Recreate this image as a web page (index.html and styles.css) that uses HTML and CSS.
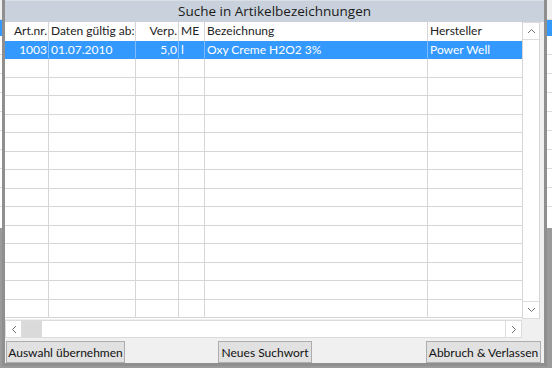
FILE: index.html
```html
<!DOCTYPE html>
<html lang="de">
<head>
  <meta charset="UTF-8" />
  <title>Suche in Artikelbezeichnungen</title>
  <link rel="stylesheet" href="styles.css">
</head>
<body>

<div class="desk">
  <div class="desk-rows">
    <div class="desk-row top"></div>
    <div class="desk-row blue"></div>
    <div class="desk-row"></div>
    <div class="desk-row"></div>
    <div class="desk-row"></div>
    <div class="desk-row"></div>
    <div class="desk-row"></div>
    <div class="desk-row"></div>
    <div class="desk-row"></div>
    <div class="desk-row"></div>
    <div class="desk-row"></div>
  </div>
  <div class="desk-bottom"></div>
</div>

<div class="dialog">
  <div class="title">Suche in Artikelbezeichnungen</div>

  <div class="grid-area">
    <div class="grid">
      <div class="row head">
        <div class="cell num">Art.nr.</div>
        <div class="cell">Daten gültig ab:</div>
        <div class="cell num">Verp.</div>
        <div class="cell">ME</div>
        <div class="cell">Bezeichnung</div>
        <div class="cell">Hersteller</div>
      </div>
      <div class="row sel">
        <div class="cell num">1003</div>
        <div class="cell">01.07.2010</div>
        <div class="cell num">5,0</div>
        <div class="cell">l</div>
        <div class="cell">Oxy Creme H2O2 3%</div>
        <div class="cell">Power Well</div>
      </div>
      <div class="row"><div class="cell"></div><div class="cell"></div><div class="cell"></div><div class="cell"></div><div class="cell"></div><div class="cell"></div></div>
      <div class="row"><div class="cell"></div><div class="cell"></div><div class="cell"></div><div class="cell"></div><div class="cell"></div><div class="cell"></div></div>
      <div class="row"><div class="cell"></div><div class="cell"></div><div class="cell"></div><div class="cell"></div><div class="cell"></div><div class="cell"></div></div>
      <div class="row"><div class="cell"></div><div class="cell"></div><div class="cell"></div><div class="cell"></div><div class="cell"></div><div class="cell"></div></div>
      <div class="row"><div class="cell"></div><div class="cell"></div><div class="cell"></div><div class="cell"></div><div class="cell"></div><div class="cell"></div></div>
      <div class="row"><div class="cell"></div><div class="cell"></div><div class="cell"></div><div class="cell"></div><div class="cell"></div><div class="cell"></div></div>
      <div class="row"><div class="cell"></div><div class="cell"></div><div class="cell"></div><div class="cell"></div><div class="cell"></div><div class="cell"></div></div>
      <div class="row"><div class="cell"></div><div class="cell"></div><div class="cell"></div><div class="cell"></div><div class="cell"></div><div class="cell"></div></div>
      <div class="row"><div class="cell"></div><div class="cell"></div><div class="cell"></div><div class="cell"></div><div class="cell"></div><div class="cell"></div></div>
      <div class="row"><div class="cell"></div><div class="cell"></div><div class="cell"></div><div class="cell"></div><div class="cell"></div><div class="cell"></div></div>
      <div class="row"><div class="cell"></div><div class="cell"></div><div class="cell"></div><div class="cell"></div><div class="cell"></div><div class="cell"></div></div>
      <div class="row"><div class="cell"></div><div class="cell"></div><div class="cell"></div><div class="cell"></div><div class="cell"></div><div class="cell"></div></div>
      <div class="row"><div class="cell"></div><div class="cell"></div><div class="cell"></div><div class="cell"></div><div class="cell"></div><div class="cell"></div></div>
      <div class="row"><div class="cell"></div><div class="cell"></div><div class="cell"></div><div class="cell"></div><div class="cell"></div><div class="cell"></div></div>
    </div>

    <div class="vscroll">
      <div class="sbtn">
        <svg width="9" height="6" viewBox="0 0 9 6"><path d="M1 5 L4.5 1.5 L8 5" fill="none" stroke="#707070" stroke-width="1"/></svg>
      </div>
      <div class="vtrack"></div>
      <div class="sbtn">
        <svg width="9" height="6" viewBox="0 0 9 6"><path d="M1 1 L4.5 4.5 L8 1" fill="none" stroke="#707070" stroke-width="1"/></svg>
      </div>
    </div>
  </div>

  <div class="hscroll">
    <div class="sbtn">
      <svg width="6" height="9" viewBox="0 0 6 9"><path d="M5 1 L1.5 4.5 L5 8" fill="none" stroke="#707070" stroke-width="1"/></svg>
    </div>
    <div class="thumb"></div>
    <div class="htrack"></div>
    <div class="sbtn">
      <svg width="6" height="9" viewBox="0 0 6 9"><path d="M1 1 L4.5 4.5 L1 8" fill="none" stroke="#707070" stroke-width="1"/></svg>
    </div>
    <div class="corner"></div>
  </div>

  <div class="buttons">
    <button class="btn">Auswahl übernehmen</button>
    <button class="btn middle">Neues Suchwort</button>
    <button class="btn last">Abbruch &amp; Verlassen</button>
  </div>
</div>

</body>
</html>
```

FILE: styles.css
```css
* {
  box-sizing: border-box;
}

body {
  margin: 0;
  width: 552px;
  height: 368px;
  overflow: hidden;
  position: relative;
  font-family: Lato, "Liberation Sans", sans-serif;
  font-size: 12px;
  color: #111;
  background: #fff;
}

/* the application window behind the dialog */
.desk {
  height: 368px;
  display: flex;
  flex-direction: column;
}

.desk-rows {
  height: 228px;
  background: #fff;
}

.desk-row {
  height: 19px;
  border-bottom: 1px solid #dcdcdc;
}

.desk-row.top {
  height: 20px;
  background: #f0f0f0;
}

.desk-row.blue {
  height: 16px;
  background: #3399ff;
  border-bottom: 0;
}

.desk-bottom {
  flex: 1;
  background: #9a9a9a;
}

/* dialog window */
.dialog {
  position: absolute;
  left: 2px;
  top: 0;
  width: 545px;
  height: 366px;
  background: #f0f0f0;
  border: 3px solid #8f8f8f;
  border-top: 0;
  padding-right: 4px;
  display: flex;
  flex-direction: column;
}

.title {
  height: 22px;
  margin-right: -4px;
  background: #c9d2dc;
  border-top: 1px solid #d9dee4;
  text-align: center;
  font-family: "Open Sans", "Noto Sans", sans-serif;
  font-size: 13.5px;
  line-height: 20px;
  color: #1a1a1a;
}

.grid-area {
  display: flex;
  height: 297px;
  background: #fff;
}

.grid {
  width: 518px;
  overflow: hidden;
}

.row {
  display: grid;
  grid-template-columns: 44px 87px 43px 26px 223px 95px;
  height: 18.47px;
}

.row.head {
  height: 19px;
}

.cell {
  border-right: 1px solid #d6d6d6;
  border-bottom: 1px solid #d6d6d6;
  padding: 0 2px;
  line-height: 17px;
  white-space: nowrap;
  overflow: hidden;
}

.head .cell {
  border-bottom: 0;
  color: #222;
}

.cell.num {
  text-align: right;
  padding-right: 1px;
}

.row.sel {
  background: #3399ff;
  color: #fff;
}

.row.sel .cell {
  border-color: #7fbcff;
  border-bottom-color: #3399ff;
}

.vscroll {
  width: 18px;
  display: flex;
  flex-direction: column;
  border-left: 1px solid #d6d6d6;
  border-right: 1px solid #d6d6d6;
}

.sbtn {
  width: 17px;
  height: 18px;
  display: flex;
  align-items: center;
  justify-content: center;
  background: #fff;
  border: 1px solid #dcdcdc;
}

.vscroll .sbtn {
  width: 16px;
  border-left: 0;
  border-right: 0;
}

.vtrack {
  flex: 1;
}

.hscroll {
  display: flex;
  height: 18px;
  margin-top: 1px;
  background: #fff;
}

.thumb {
  width: 20px;
  background: #dadada;
  border-top: 1px solid #dcdcdc;
  border-bottom: 1px solid #dcdcdc;
}

.htrack {
  flex: 1;
  border-top: 1px solid #dcdcdc;
  border-bottom: 1px solid #dcdcdc;
}

.corner {
  width: 18px;
  background: #f0f0f0;
}

.buttons {
  display: flex;
  align-items: flex-start;
  padding: 3px 0 0 1px;
  flex: 1;
}

.btn {
  width: 119px;
  height: 22px;
  padding: 0;
  font-family: Lato, "Liberation Sans", sans-serif;
  font-size: 12px;
  color: #111;
  background: #e1e1e1;
  border: 1px solid #adadad;
  border-radius: 0;
}

.btn.middle {
  width: 94px;
  margin-left: 93px;
}

.btn.last {
  width: 115px;
  margin-left: auto;
  margin-right: -1px;
}
```
